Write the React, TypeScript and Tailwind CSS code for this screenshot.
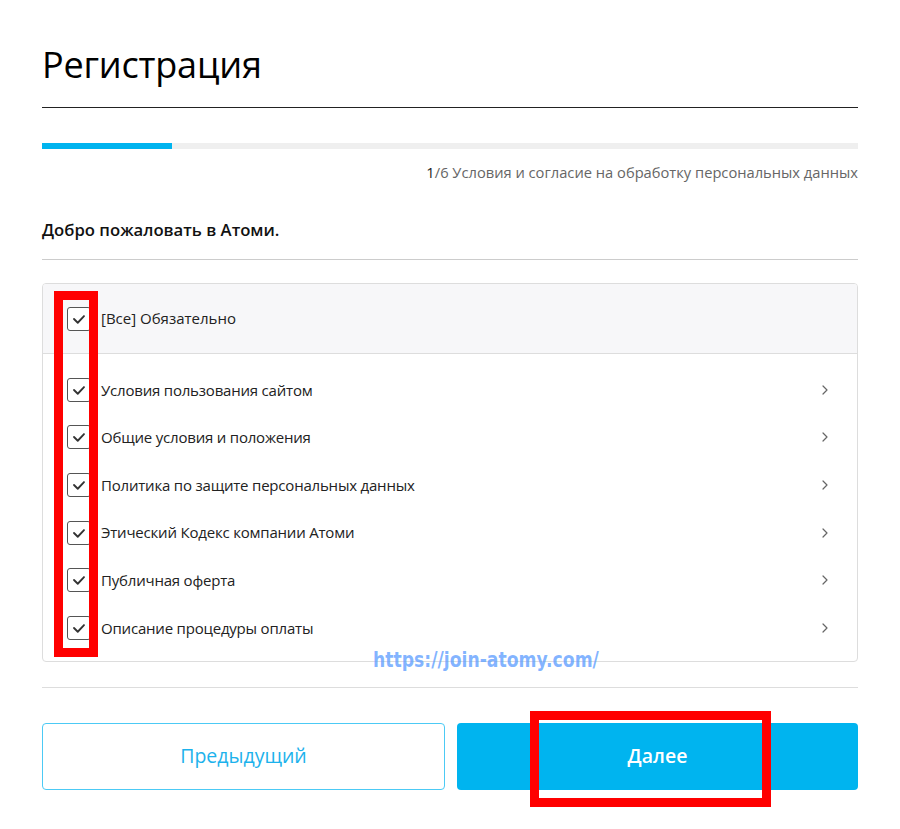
import { ChevronRight } from 'lucide-react'

const TERMS = [
  'Условия пользования сайтом',
  'Общие условия и положения',
  'Политика по защите персональных данных',
  'Этический Кодекс компании Атоми',
  'Публичная оферта',
  'Описание процедуры оплаты',
]

function CheckBox() {
  return (
    <span className="flex h-6 w-6 shrink-0 items-center justify-center rounded-[3px] border border-[#555] bg-white">
      <svg viewBox="0 0 24 24" className="h-[20px] w-[20px]" fill="none" stroke="#333" strokeWidth="2.2" strokeLinecap="round" strokeLinejoin="round">
        <path d="M6 12l4.5 4.5L18 8.5" />
      </svg>
    </span>
  )
}

export default function App() {
  return (
    <div
      className="relative min-h-[829px] w-[900px] bg-white px-[42px] pt-[40px] text-[#222]"
      style={{ fontFamily: '"Open Sans", "Noto Sans", sans-serif' }}
    >
      {/* Header */}
      <h1 className="text-[36px] font-normal leading-[50px] tracking-[-0.2px] text-black">Регистрация</h1>
      <div className="mt-[17px] h-px bg-[#222]" />

      {/* Progress */}
      <div className="mt-[35px] flex h-[6px] bg-[#efefef]">
        <div className="w-[130px] bg-[#00b4ef]" />
      </div>
      <p className="mt-[13px] text-right text-[14.7px] leading-[20px] text-[#666]">
        <span className="text-[#222]">1</span>/6 Условия и согласие на обработку персональных данных
      </p>

      <h2 className="mt-[36px] text-[16.7px] font-semibold leading-[24px] text-[#111]">Добро пожаловать в Атоми.</h2>
      <div className="mt-[17px] h-px bg-[#ccc]" />

      {/* Agreement box */}
      <div className="relative mt-[23px]">
        <div className="overflow-hidden rounded-[4px] border border-[#ddd]">
          <div className="flex h-[70px] items-center gap-[10px] border-b border-[#ddd] bg-[#f7f7f9] pl-[24px]">
            <CheckBox />
            <span className="text-[15px]">[Все] Обязательно</span>
          </div>
          <ul className="pb-[9px] pt-[12px]">
            {TERMS.map((t) => (
              <li key={t} className="flex h-[47.6px] items-center gap-[10px] pl-[24px] pr-[24px]">
                <CheckBox />
                <span className="flex-1 text-[15px] tracking-[-0.2px]">{t}</span>
                <ChevronRight className="h-[16px] w-[16px] text-[#666]" strokeWidth={1.8} />
              </li>
            ))}
          </ul>
        </div>

        {/* annotation overlays */}
        <div className="pointer-events-none absolute left-[12px] top-[8px] h-[366px] w-[44px] border-[9px] border-[#ff0000]" />
        <span
          className="pointer-events-none absolute left-[331px] top-[363px] origin-left scale-x-[0.82] text-[21px] font-bold leading-[28px] text-[#5a9cff]/75"
          style={{ fontFamily: '"DejaVu Sans", sans-serif' }}
        >
          https://join-atomy.com/
        </span>
      </div>

      <div className="mt-[25px] h-px bg-[#ddd]" />

      {/* Buttons */}
      <div className="relative mt-[35px] flex gap-[12px]">
        <button className="flex h-[67px] flex-1 items-center justify-center rounded-[4px] border border-[#4ccaf5] bg-white text-[19.5px] font-medium text-[#1cb2ec]">
          Предыдущий
        </button>
        <button className="flex h-[67px] flex-1 items-center justify-center rounded-[4px] bg-[#00b4ef] text-[19.5px] font-semibold text-white">
          Далее
        </button>
        <div className="pointer-events-none absolute left-[488px] top-[-12px] h-[96px] w-[241px] border-[9px] border-[#ff0000]" />
      </div>
    </div>
  )
}
